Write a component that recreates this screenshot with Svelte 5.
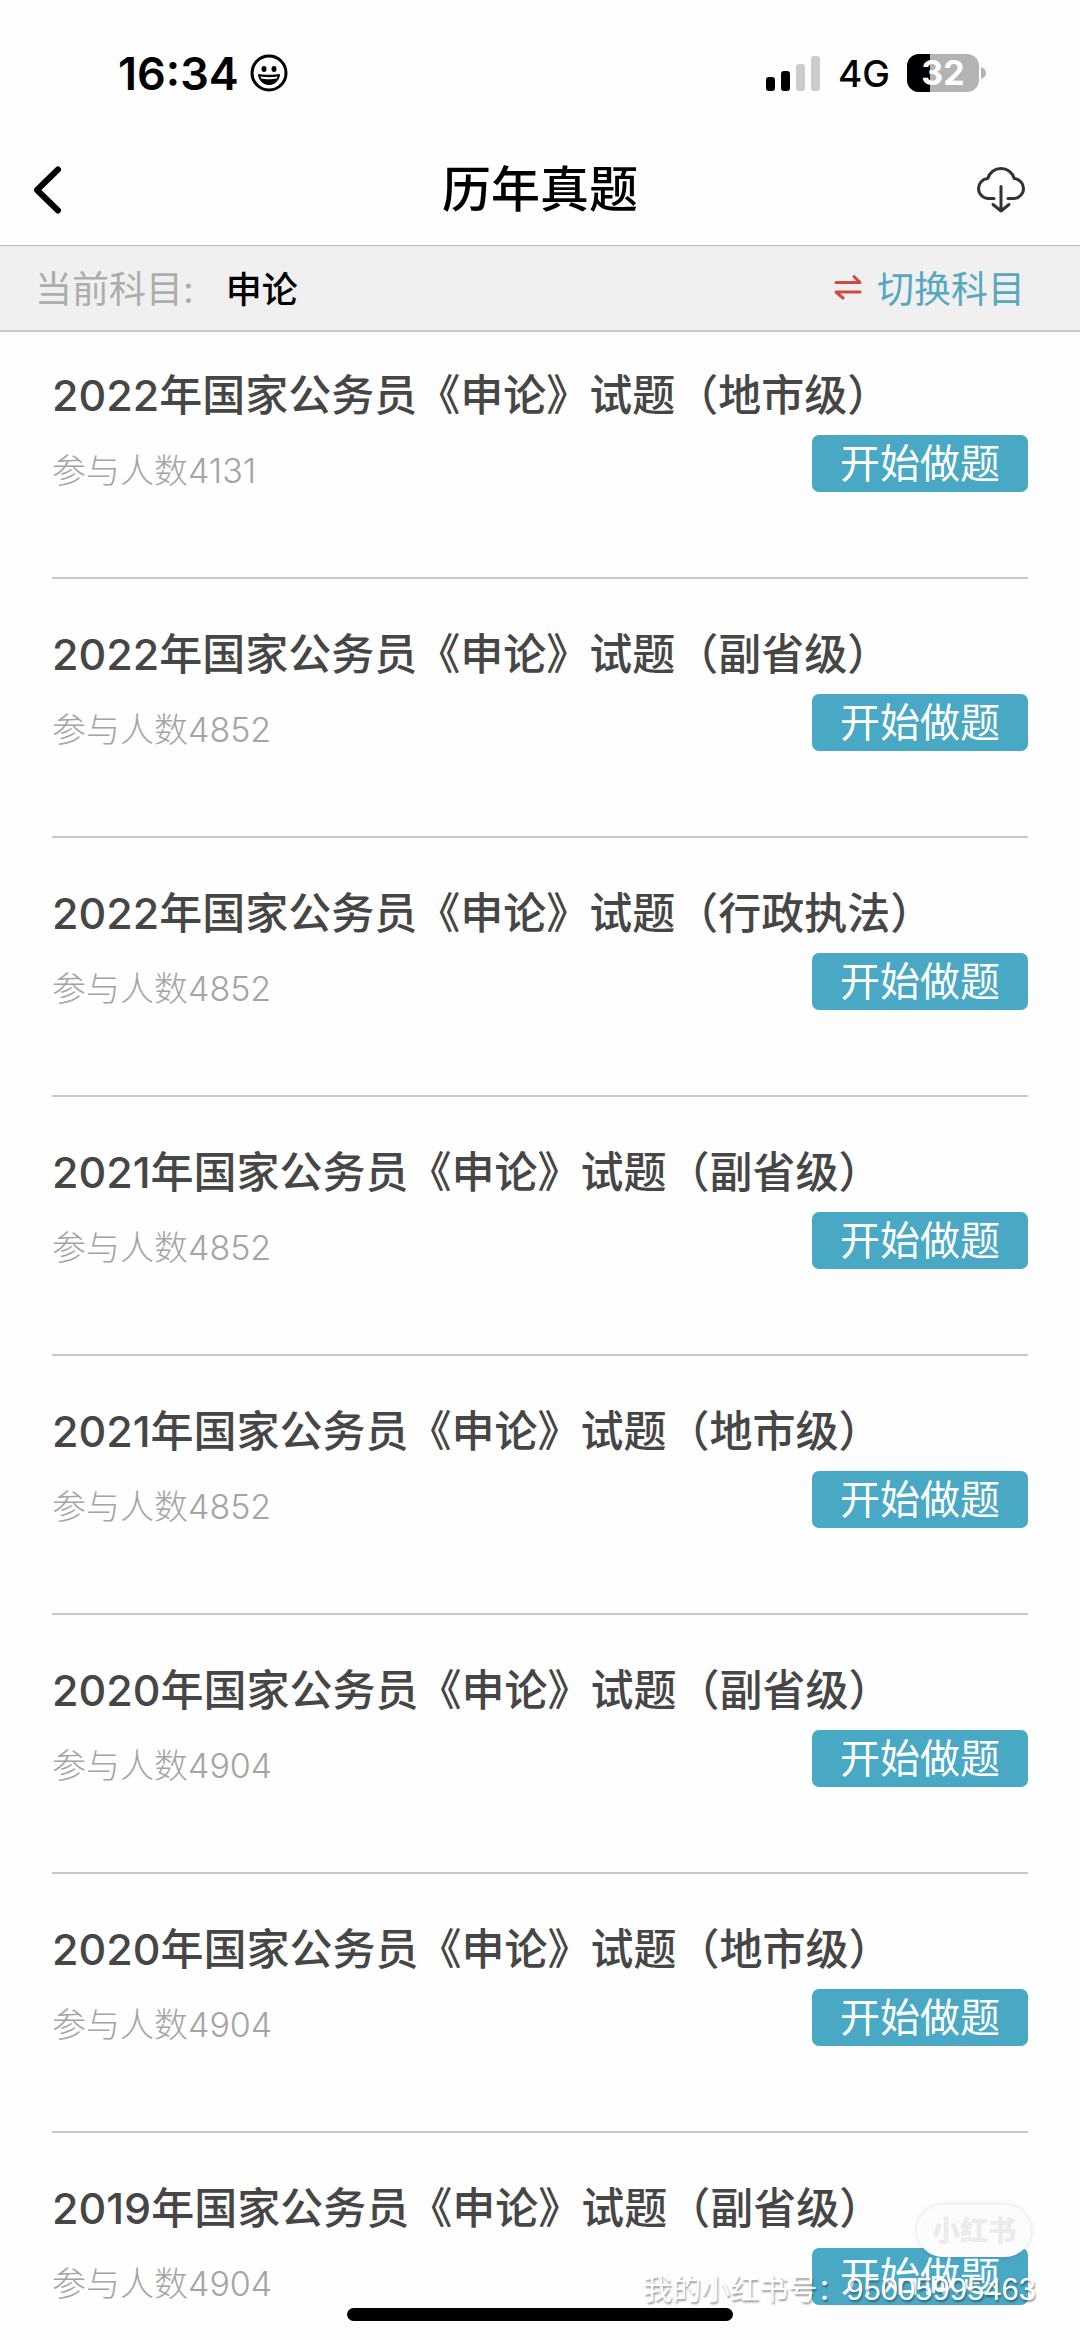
<script lang="ts">
	interface Paper {
		title: string;
		count: number;
	}

	const subject = '申论';
	const battery = 32;

	const papers: Paper[] = [
		{ title: '2022年国家公务员《申论》试题（地市级）', count: 4131 },
		{ title: '2022年国家公务员《申论》试题（副省级）', count: 4852 },
		{ title: '2022年国家公务员《申论》试题（行政执法）', count: 4852 },
		{ title: '2021年国家公务员《申论》试题（副省级）', count: 4852 },
		{ title: '2021年国家公务员《申论》试题（地市级）', count: 4852 },
		{ title: '2020年国家公务员《申论》试题（副省级）', count: 4904 },
		{ title: '2020年国家公务员《申论》试题（地市级）', count: 4904 },
		{ title: '2019年国家公务员《申论》试题（副省级）', count: 4904 }
	];
</script>

<div class="app">
	<div class="status-bar">
		<div class="status-left">
			<span class="time">16:34</span>
			<svg width="38" height="38" viewBox="0 0 38 38" fill="none" stroke="#000">
				<circle cx="19" cy="19" r="17" stroke-width="3" />
				<ellipse cx="14" cy="15" rx="2.5" ry="3" fill="#000" stroke="none" />
				<ellipse cx="24" cy="15" rx="2.5" ry="3" fill="#000" stroke="none" />
				<path d="M8.500 20.500c3 1 18 1 21 0c-.5 6-5 10-10.500 10s-10-4-10.500-10z" fill="#000" stroke-width="1" />
				<path d="M10.500 22.300c4 1.200 13 1.200 17 0l-.7 2.200c-4 1-11.600 1-15.600 0z" fill="#fff" stroke="none" />
			</svg>
		</div>
		<div class="status-right">
			<svg width="55" height="35" viewBox="0 0 55 35">
				<rect x="0" y="21" width="9" height="14" rx="3" />
				<rect x="15" y="15" width="9" height="20" rx="3" />
				<rect x="30" y="8" width="9" height="27" rx="3" fill="#cbcbcb" />
				<rect x="45" y="0" width="9" height="35" rx="3" fill="#cbcbcb" />
			</svg>
			<span class="network">4G</span>
			<div class="battery">
				<div class="battery-body">
					<div class="battery-fill" style="width: {battery}%"></div>
					<span class="battery-level">{battery}</span>
				</div>
				<svg width="5" height="12" viewBox="0 0 5 12">
					<path d="M0 0c3 1 5 3 5 6s-2 5-5 6z" fill="#b3b3b3" />
				</svg>
			</div>
		</div>
	</div>

	<header class="nav-bar">
		<button type="button" class="icon-btn" aria-label="返回">
			<svg width="30" height="48" viewBox="0 0 30 48" fill="none" stroke="#000" stroke-width="6" stroke-linecap="round" stroke-linejoin="round">
				<path d="M25 3.500L4 24l21 20.500" />
			</svg>
		</button>
		<h1>历年真题</h1>
		<button type="button" class="icon-btn download-btn" aria-label="下载">
			<svg width="48" height="46" viewBox="0 0 48 46" fill="none" stroke="#333" stroke-width="3" stroke-linecap="round" stroke-linejoin="round">
				<path d="M17 31.500h-5.500c-5.500 0-10-4.500-10-10c0-5.200 4-9.500 9.200-9.900C12.500 5.600 17.700 1.500 24 1.500s11.500 4.100 13.300 10.100c5.200.4 9.200 4.700 9.200 9.900c0 5.500-4.500 10-10 10H31" />
				<path d="M24 19.500v24M16 37.500l8 6.500l8-6.500" />
			</svg>
		</button>
	</header>

	<div class="subject-bar">
		<span class="subject-label">当前科目:</span>
		<span class="subject-name">{subject}</span>
		<button type="button" class="switch-btn">
			<svg width="28" height="26" viewBox="0 0 28 26" fill="none" stroke="#cf4b41" stroke-width="3" stroke-linecap="round" stroke-linejoin="round">
				<path d="M2 8.500h24l-6-6" />
				<path d="M26 18H2l7 6" />
			</svg>
			切换科目
		</button>
	</div>

	<ul class="paper-list">
		{#each papers as paper}
			<li class="paper">
				<h2>{paper.title}</h2>
				<div class="paper-meta">
					<span class="count">参与人数{paper.count}</span>
					<button type="button" class="start-btn">开始做题</button>
				</div>
			</li>
		{/each}
	</ul>

	<div class="brand-pill">小红书</div>
	<div class="account">我的小红书号：<span class="account-id">95005995463</span></div>
	<div class="home-indicator"></div>
</div>

<style>
	:global(body) {
		background: #fff;
	}

	.app {
		position: relative;
		height: 100vh;
		display: flex;
		flex-direction: column;
		overflow: hidden;
		background: #fefefe;
		color: #000;
		font-family: Inter, 'Noto Sans CJK SC', sans-serif;
	}

	button {
		border: none;
		padding: 0;
		background: transparent;
		font-family: inherit;
		cursor: pointer;
	}

	svg {
		display: block;
		flex-shrink: 0;
	}

	.status-bar {
		display: flex;
		justify-content: space-between;
		align-items: center;
		height: 146px;
		padding: 0 94px 0 118px;
		box-sizing: border-box;
		flex-shrink: 0;
	}

	.status-left,
	.status-right,
	.battery {
		display: flex;
		align-items: center;
	}

	.status-left {
		gap: 11px;
	}

	.status-right {
		gap: 17px;
	}

	.time {
		font-size: 45px;
		font-weight: 600;
	}

	.network {
		font-size: 37px;
		font-weight: 500;
	}

	.battery {
		gap: 2px;
	}

	.battery-body {
		position: relative;
		display: flex;
		align-items: center;
		justify-content: center;
		width: 72px;
		height: 38px;
		border-radius: 12px;
		background: #b3b3b3;
	}

	.battery-fill {
		position: absolute;
		left: 0;
		top: 0;
		bottom: 0;
		border-radius: 12px 0 0 12px;
		background: #000;
	}

	.battery-level {
		position: relative;
		color: #fff;
		font-size: 34px;
		line-height: 38px;
		font-weight: 700;
	}

	.nav-bar {
		display: grid;
		grid-template-columns: 1fr auto 1fr;
		align-items: center;
		height: 99px;
		padding: 0 33px 12px;
		box-sizing: border-box;
		flex-shrink: 0;
	}

	.icon-btn {
		display: flex;
		width: 48px;
	}

	.download-btn {
		justify-self: end;
		margin-right: 22px;
	}

	h1 {
		margin: 0;
		font-size: 49px;
		line-height: 72px;
		font-weight: 500;
	}

	.subject-bar {
		display: flex;
		align-items: center;
		height: 87px;
		padding: 0 55px 2px 35px;
		box-sizing: border-box;
		border-top: 1px solid #bdbdbd;
		border-bottom: 2px solid #c9c9c9;
		background: #f0f0f0;
		font-size: 37px;
		flex-shrink: 0;
	}

	.subject-label {
		color: #adadad;
	}

	.subject-name {
		margin-left: 32px;
		font-size: 36px;
		font-weight: 500;
	}

	.switch-btn {
		display: flex;
		align-items: center;
		gap: 15px;
		margin-left: auto;
		color: #56a8bf;
		font-size: 37px;
	}

	.paper-list {
		flex: 1;
		min-height: 0;
		margin: 0;
		padding: 0 52px;
		list-style: none;
		overflow-y: auto;
		scrollbar-width: none;
	}

	.paper {
		height: 259px;
		padding-top: 45px;
		box-sizing: border-box;
		border-bottom: 2px solid #c8c8c8;
	}

	.paper:first-child {
		height: 247px;
		padding-top: 33px;
	}

	h2 {
		margin: 0;
		color: #464646;
		font-size: 43px;
		line-height: 60px;
		font-weight: 500;
		white-space: nowrap;
	}

	.paper-meta {
		display: flex;
		justify-content: space-between;
		align-items: flex-end;
		margin-top: 10px;
	}

	.count {
		color: #a4a4a4;
		font-size: 34px;
		line-height: 42px;
		font-weight: 300;
	}

	.start-btn {
		width: 216px;
		height: 57px;
		border-radius: 7px;
		background: #49a9c5;
		color: #fff;
		font-size: 40px;
		line-height: 57px;
		font-weight: 400;
	}

	.brand-pill {
		position: absolute;
		right: 49px;
		bottom: 84px;
		width: 114px;
		border-radius: 26px;
		background: #fcfcfc;
		box-shadow: 0 0 6px rgba(0, 0, 0, 0.12);
		color: #ebebeb;
		font-size: 28px;
		line-height: 52px;
		font-weight: 900;
		text-align: center;
	}

	.account {
		position: absolute;
		right: 44px;
		bottom: 31px;
		color: #fff;
		font-family: 'Liberation Sans', 'Noto Sans CJK SC', sans-serif;
		font-size: 29px;
		line-height: 40px;
		text-shadow: 1px 2px 2px rgba(0, 0, 0, 0.4);
		white-space: nowrap;
	}

	.account-id {
		font-size: 31px;
	}

	.home-indicator {
		position: absolute;
		left: 50%;
		bottom: 20px;
		width: 386px;
		height: 13px;
		border-radius: 7px;
		background: #000;
		transform: translateX(-50%);
	}
</style>
